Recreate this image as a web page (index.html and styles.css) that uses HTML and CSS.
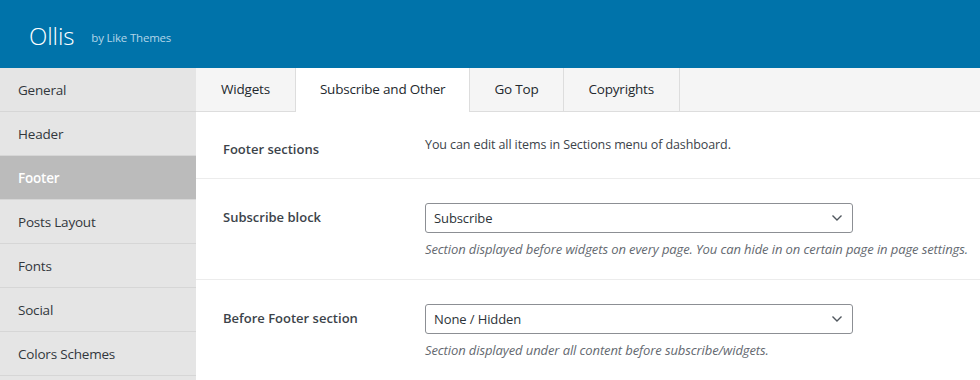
FILE: index.html
```html
<!DOCTYPE html>
<html lang="en">
<head>
    <meta charset="UTF-8">
    <title>Ollis Theme Options</title>
    <link rel="stylesheet" href="styles.css">
</head>
<body>
    <div class="topbar">
        <h1>Ollis</h1>
        <span class="by">by Like Themes</span>
    </div>
    <div class="panel">
        <ul class="sidebar">
            <li>General</li>
            <li>Header</li>
            <li class="active">Footer</li>
            <li>Posts Layout</li>
            <li>Fonts</li>
            <li>Social</li>
            <li>Colors Schemes</li>
            <li></li>
        </ul>
        <div class="main">
            <div class="tabs">
                <div class="tab first">Widgets</div>
                <div class="tab active">Subscribe and Other</div>
                <div class="tab">Go Top</div>
                <div class="tab last">Copyrights</div>
            </div>
            <div class="row row-info">
                <div class="label">Footer sections</div>
                <div class="field">
                    <p class="note">You can edit all items in Sections menu of dashboard.</p>
                </div>
            </div>
            <div class="row">
                <div class="label">Subscribe block</div>
                <div class="field">
                    <div class="select">
                        <span>Subscribe</span>
                        <svg width="12" height="8" viewBox="0 0 12 8"><path d="M1.5 1.5 L6 6 L10.5 1.5" fill="none" stroke="#50575e" stroke-width="1.4"/></svg>
                    </div>
                    <p class="help">Section displayed before widgets on every page. You can hide in on certain page in page settings.</p>
                </div>
            </div>
            <div class="row">
                <div class="label">Before Footer section</div>
                <div class="field">
                    <div class="select">
                        <span>None / Hidden</span>
                        <svg width="12" height="8" viewBox="0 0 12 8"><path d="M1.5 1.5 L6 6 L10.5 1.5" fill="none" stroke="#50575e" stroke-width="1.4"/></svg>
                    </div>
                    <p class="help">Section displayed under all content before subscribe/widgets.</p>
                </div>
            </div>
        </div>
    </div>
</body>
</html>
```

FILE: styles.css
```css
body {
    margin: 0;
    font-family: 'Open Sans', 'Noto Sans', sans-serif;
    color: #23282d;
    background: #fff;
    overflow: hidden;
}
.topbar {
    background: #0073aa;
    height: 68px;
    display: flex;
    align-items: center;
    padding-left: 29px;
    padding-top: 2px;
    box-sizing: border-box;
}
.topbar h1 {
    margin: 0;
    font-size: 24px;
    font-weight: 300;
    color: #fff;
    letter-spacing: -0.1px;
}
.by {
    margin-left: 17px;
    margin-top: 5px;
    font-size: 11.5px;
    color: #b3d5e8;
    letter-spacing: -0.2px;
}
.panel {
    display: flex;
}
.sidebar {
    list-style: none;
    margin: 0;
    padding: 0;
    width: 196px;
    flex-shrink: 0;
    background: #e5e5e5;
}
.sidebar li {
    height: 43px;
    line-height: 44px;
    padding-left: 18px;
    font-size: 13.5px;
    color: #32373c;
    border-bottom: 1px solid #d6d6d6;
    letter-spacing: -0.2px;
}
.sidebar li.active {
    background: #bbbbbb;
    color: #fff;
    font-weight: 600;
}
.main {
    flex: 1;
}
.tabs {
    display: flex;
    background: #f5f5f5;
    border-bottom: 1px solid #dddddd;
    height: 43px;
}
.tab {
    height: 43px;
    line-height: 43px;
    padding: 0 24px;
    font-size: 13.5px;
    color: #23282d;
    border-right: 1px solid #dddddd;
    letter-spacing: -0.2px;
}
.tab.first {
    padding: 0 25px;
}
.tab.last {
    padding: 0 25px;
}
.tab.active {
    background: #fff;
    height: 44px;
}
.row {
    display: flex;
    border-bottom: 1px solid #ececec;
    padding: 24px 0 21px 27px;
}
.row-info {
    padding-bottom: 20px;
}
.label {
    width: 202px;
    flex-shrink: 0;
    font-size: 13px;
    line-height: 18px;
    font-weight: 600;
    color: #3c434a;
    padding-top: 5px;
}
.row-info .label {
    padding-top: 4px;
}
.field {
    flex: 1;
}
.note {
    margin: 0;
    font-size: 12.5px;
    line-height: 18px;
    color: #3c434a;
    letter-spacing: -0.1px;
}
.select {
    width: 428px;
    height: 30px;
    box-sizing: border-box;
    border: 1px solid #8c8f94;
    border-radius: 3px;
    display: flex;
    align-items: center;
    justify-content: space-between;
    padding: 0 9px 0 8px;
    font-size: 13px;
    color: #2c3338;
    letter-spacing: -0.1px;
}
.help {
    margin: 7px 0 0;
    font-size: 13px;
    line-height: 18px;
    font-style: italic;
    color: #646970;
    letter-spacing: -0.1px;
}
```
